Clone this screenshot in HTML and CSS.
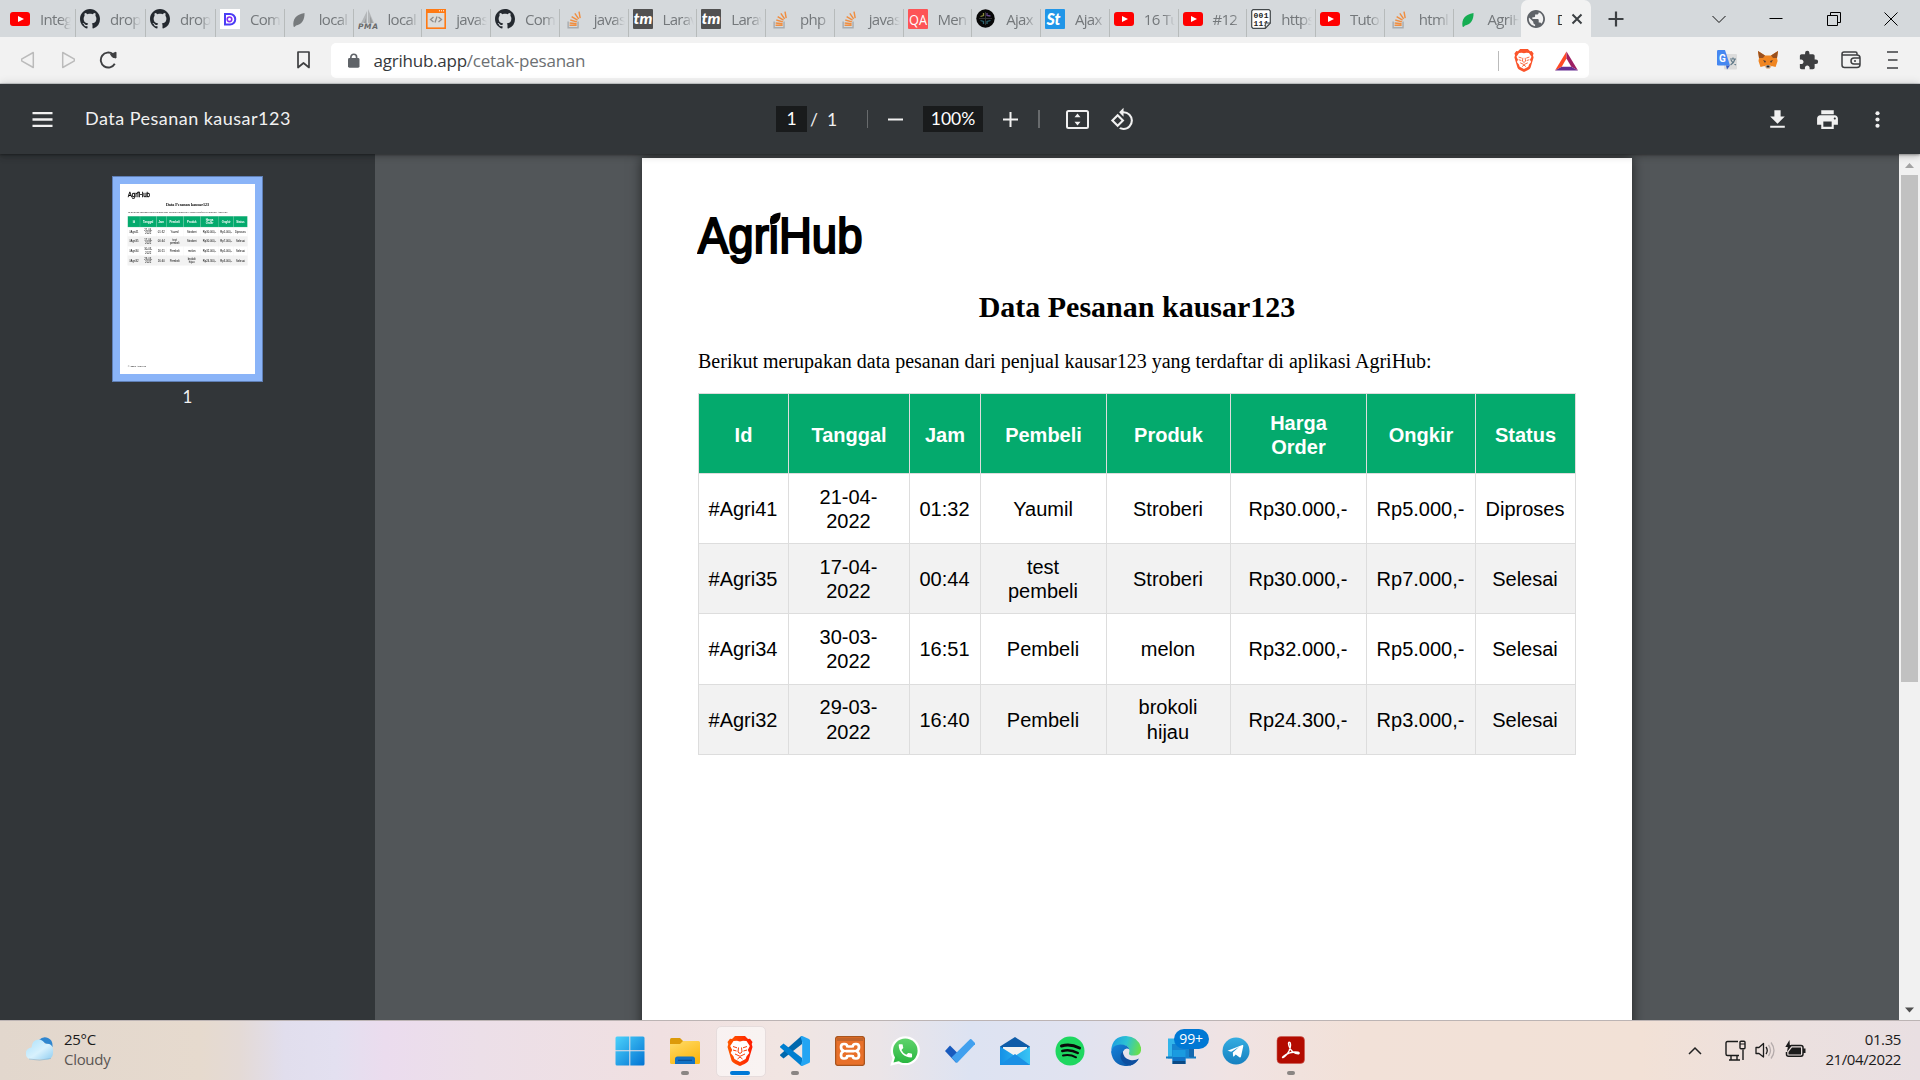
FILE: index.html
```html
<!DOCTYPE html>
<html lang="id">
<head>
<meta charset="utf-8">
<title>Data Pesanan kausar123</title>
<link rel="stylesheet" href="styles.css">
</head>
<body>
<svg class="defs" width="0" height="0" aria-hidden="true">
  <defs>
    <linearGradient id="gWin" x1="0" y1="0" x2="1" y2="1"><stop offset="0" stop-color="#4cd2fb"/><stop offset="1" stop-color="#0273d3"/></linearGradient>
    <linearGradient id="gFolder" x1="0" y1="0" x2="0.6" y2="1"><stop offset="0" stop-color="#ffdc6a"/><stop offset="1" stop-color="#fcb813"/></linearGradient>
    <linearGradient id="gBrave" x1="0" x2="1"><stop offset="0" stop-color="#ff5a00"/><stop offset="0.5" stop-color="#ff3c00"/><stop offset="1" stop-color="#ff1a00"/></linearGradient>
    <linearGradient id="gEdgeTop" x1="0" y1="0.3" x2="1" y2="0.5"><stop offset="0" stop-color="#1b9de2"/><stop offset="0.5" stop-color="#2dc3d2"/><stop offset="1" stop-color="#6be04a"/></linearGradient>
    <linearGradient id="gEdgeLow" x1="0" y1="0" x2="1" y2="1"><stop offset="0" stop-color="#1584dc"/><stop offset="1" stop-color="#0c4f9c"/></linearGradient>
    <linearGradient id="gTele" x1="0" y1="0" x2="0" y2="1"><stop offset="0" stop-color="#35ade1"/><stop offset="1" stop-color="#1680c0"/></linearGradient>
    <linearGradient id="gWhats" x1="0" y1="0" x2="0" y2="1"><stop offset="0" stop-color="#5fd36c"/><stop offset="1" stop-color="#2bb741"/></linearGradient>
    <linearGradient id="gMail" x1="0" y1="0" x2="1" y2="0"><stop offset="0" stop-color="#1591e6"/><stop offset="1" stop-color="#38c4f5"/></linearGradient>
    <linearGradient id="gCloud" x1="0" y1="0" x2="1" y2="1"><stop offset="0" stop-color="#a9e0fb"/><stop offset="0.55" stop-color="#d8f1fd"/><stop offset="1" stop-color="#8fcdf1"/></linearGradient>
    <symbol id="i-yt" viewBox="0 0 20 20"><rect y="3" width="20" height="14" rx="3" fill="#f00"/><path d="M8 7l6 3-6 3z" fill="#fff"/></symbol>
    <symbol id="i-gh" viewBox="0 0 16 16"><path fill="#24292f" d="M8 0C3.58 0 0 3.58 0 8c0 3.54 2.29 6.53 5.47 7.59.4.07.55-.17.55-.38 0-.19-.01-.82-.01-1.49-2.01.37-2.53-.49-2.69-.94-.09-.23-.48-.94-.82-1.13-.28-.15-.68-.52-.01-.53.63-.01 1.08.58 1.23.82.72 1.21 1.87.87 2.33.66.07-.52.28-.87.51-1.07-1.78-.2-3.64-.89-3.64-3.95 0-.87.31-1.59.82-2.15-.08-.2-.36-1.02.08-2.12 0 0 .67-.21 2.2.82.64-.18 1.32-.27 2-.27s1.36.09 2 .27c1.53-1.04 2.2-.82 2.2-.82.44 1.1.16 1.92.08 2.12.51.56.82 1.27.82 2.15 0 3.07-1.87 3.75-3.65 3.95.29.25.54.73.54 1.48 0 1.07-.01 1.93-.01 2.2 0 .21.15.46.55.38A8.01 8.01 0 0 0 16 8c0-4.42-3.58-8-8-8z"/></symbol>
    <symbol id="i-so" viewBox="0 0 24 24"><path fill="#f48024" opacity=".85" d="M15 20.500h-10v-2h10v2zm6-11.165l-1.621-9.335-1.993.346 1.620 9.335 1.994-.346zm-5.964 6.937l-9.746-.975-.186 2.016 9.755.879.177-1.920zm.538-2.587l-9.276-2.608-.526 1.954 9.306 2.500.496-1.846zm1.204-2.413l-8.297-4.864-1.029 1.743 8.298 4.865 1.028-1.744zm1.866-1.467l-5.339-7.829-1.672 1.140 5.339 7.829 1.672-1.140z"/><path fill="#a8acaf" d="M16 14v8H4v-8H2v10h16V14z"/></symbol>
    <symbol id="i-tm" viewBox="0 0 20 20"><rect width="20" height="20" rx="1" fill="#515151"/><text x="0.500" y="15" font-family="Lato" font-size="15" font-weight="900" font-style="italic" fill="#fff" textLength="19" lengthAdjust="spacingAndGlyphs">tm</text></symbol>
    <symbol id="i-leaf" viewBox="0 0 20 20"><path d="M4.500 17.500C3.500 10 7 5.500 15.500 4c.5 7-3.500 12-8.500 12.500l-1.500 1.500z"/></symbol>
    <symbol id="i-brave" viewBox="0 0 26 30"><path d="M8 0h10l3 3 2-.3L25.500 6l-.8 2 .8 3-4 13.500c-.6 2-5 4-8.500 5.500-3.500-1.500-7.900-3.500-8.500-5.500L.5 11l.8-3-.8-2L3 2.700 5 3z"/><path fill="#fff" d="M13 5.500l3-.7 3.500.3 3.300 5-2 3.800 1.500 3-2.700 3.300-1 2.800L13 26l-5.600-3-1-2.800-2.700-3.300 1.500-3-2-3.800 3.300-5 3.500-.3z"/><path fill="none" stroke="#f8400a" stroke-width="1" d="M6 10.500l4 1.300M20 10.500l-4 1.300M11.500 11.500L11 16l2 1.500 2-1.500-.5-4.500M8 18l5 2.300L18 18M10.500 23l2.500-2 2.500 2M6 14l3.500 1M20 14l-3.500 1"/></symbol>
  </defs>
</svg>

<div class="screen">
  <header class="tabstrip">
    <div class="tabs">
      <div class="tab"><svg class="fav"><use href="#i-yt"/></svg><span>Integ</span></div>
      <div class="tab"><svg class="fav"><use href="#i-gh"/></svg><span>dropz</span></div>
      <div class="tab"><svg class="fav"><use href="#i-gh"/></svg><span>dropz</span></div>
      <div class="tab"><svg class="fav" viewBox="0 0 20 20"><rect width="20" height="20" fill="#fff"/><path d="M5 5h5a5 5 0 0 1 0 10.500H5z" fill="none" stroke="#4a3df5" stroke-width="2"/><circle cx="9.500" cy="10.300" r="2.300" fill="none" stroke="#8a2cf0" stroke-width="1.600"/></svg><span>Com</span></div>
      <div class="tab"><svg class="fav gray"><use href="#i-leaf"/></svg><span>local</span></div>
      <div class="tab"><svg class="fav" viewBox="0 0 20 20"><path d="M3 14L9 2v12zM10 14V0l6 14z" fill="#b4b7b9"/><path d="M6 14l2-5v5zM12 14V7l3 7z" fill="#9a9d9f"/><text x="0" y="19.500" font-family="DejaVu Sans" font-size="7.500" font-weight="700" font-style="italic" fill="#6a6a6a" textLength="20">PMA</text></svg><span>local</span></div>
      <div class="tab"><svg class="fav" viewBox="0 0 20 20"><rect x=".8" y=".8" width="18.400" height="18.400" fill="#dcdcda" stroke="#ff7a14" stroke-width="1.600"/><path d="M0 0h20v4H0z" fill="#ff7a14"/><path d="M13 1.800h5" stroke="#fff" stroke-dasharray="1"/><path d="M7.500 8L4.500 10.500l3 2.500M12.500 8l3 2.500-3 2.500M11 7.500l-2 6" fill="none" stroke="#8d8d8d" stroke-width="1.300"/></svg><span>javas</span></div>
      <div class="tab"><svg class="fav"><use href="#i-gh"/></svg><span>Com</span></div>
      <div class="tab"><svg class="fav so"><use href="#i-so"/></svg><span>javas</span></div>
      <div class="tab"><svg class="fav"><use href="#i-tm"/></svg><span>Larav</span></div>
      <div class="tab"><svg class="fav"><use href="#i-tm"/></svg><span>Larav</span></div>
      <div class="tab"><svg class="fav so"><use href="#i-so"/></svg><span>php</span></div>
      <div class="tab"><svg class="fav so"><use href="#i-so"/></svg><span>javas</span></div>
      <div class="tab"><svg class="fav" viewBox="0 0 20 20"><rect width="20" height="20" rx="1" fill="#fd5456"/><text x="1" y="15.500" font-family="Open Sans" font-size="14" fill="#fff" textLength="18" lengthAdjust="spacingAndGlyphs">QA</text></svg><span>Men</span></div>
      <div class="tab"><svg class="fav" viewBox="0 0 20 20"><circle cx="9.500" cy="9.500" r="9.200" fill="#080808"/><path d="M4.500 7.500l3-1V4" fill="none" stroke="#8a8a3c" stroke-width="1.300"/><path d="M11 4v2.500l3.500.5" fill="none" stroke="#6a4a90" stroke-width="1.300"/><path d="M4.500 11.500l3 1V15M11 15v-2.500l3.500-1" fill="none" stroke="#2e6570" stroke-width="1.300"/><path d="M9.500 3v13M3 9.500h13" stroke="#333"/></svg><span>Ajax</span></div>
      <div class="tab"><svg class="fav" viewBox="0 0 20 20"><rect width="20" height="20" rx="1" fill="#2196e8"/><text x="1.500" y="15.500" font-family="Lato" font-size="16" font-weight="900" font-style="italic" fill="#fff">St</text></svg><span>Ajax</span></div>
      <div class="tab"><svg class="fav"><use href="#i-yt"/></svg><span>16 Tu</span></div>
      <div class="tab"><svg class="fav"><use href="#i-yt"/></svg><span>#12</span></div>
      <div class="tab"><svg class="fav" viewBox="0 0 20 20"><path d="M2 .7h16l1.300 1.300v12l-5 5.300H2L.7 18V2z" fill="#fff" stroke="#43484a" stroke-width="1.200"/><text x="2.500" y="8.500" font-family="Liberation Mono" font-size="8" font-weight="700" fill="#222" textLength="15">001</text><text x="2.500" y="16.500" font-family="Liberation Mono" font-size="8" font-weight="700" fill="#222" textLength="15">111</text><path d="M19.300 14h-5v5z" fill="#dfe2e3" stroke="#43484a"/></svg><span>https</span></div>
      <div class="tab"><svg class="fav"><use href="#i-yt"/></svg><span>Tutor</span></div>
      <div class="tab"><svg class="fav so"><use href="#i-so"/></svg><span>html</span></div>
      <div class="tab"><svg class="fav green"><use href="#i-leaf"/></svg><span>AgriH</span></div>
      <div class="tab active"><svg class="globe" viewBox="2 2 20 20"><path fill="#5f6368" d="M12 2C6.480 2 2 6.480 2 12s4.480 10 10 10 10-4.480 10-10S17.520 2 12 2zm-1 17.930c-3.950-.49-7-3.850-7-7.930 0-.62.08-1.210.21-1.790L9 15v1c0 1.100.9 2 2 2v1.930zm6.900-2.540c-.26-.81-1-1.390-1.900-1.390h-1v-3c0-.55-.45-1-1-1H8v-2h2c.55 0 1-.45 1-1V7h2c1.100 0 2-.9 2-2v-.41c2.930 1.190 5 4.060 5 7.410 0 2.080-.8 3.970-2.100 5.390z"/></svg><span>D</span><svg class="x" viewBox="0 0 12 12"><path d="M1.500 1.500l9 9m0-9l-9 9" stroke="#3c4043" stroke-width="2"/></svg></div>
    </div>
    <svg class="plus" viewBox="0 0 16 16"><path d="M8 .5v15M.5 8h15" stroke="#3c4043" stroke-width="2.200"/></svg>
    <div class="winctl">
      <svg viewBox="0 0 14 14"><path d="M.5 4l6.500 6.500L13.500 4" fill="none" stroke="#111"/></svg>
      <svg viewBox="0 0 14 14"><path d="M.5 6.500h13" stroke="#000"/></svg>
      <svg viewBox="0 0 14 14"><path d="M.5 3.500h10v10H.5zM3.500 3V.5h10v10H11" fill="none" stroke="#000"/></svg>
      <svg viewBox="0 0 14 14"><path d="M.5.5l13 13m0-13l-13 13" stroke="#000"/></svg>
    </div>
  </header>

  <div class="navbar">
    <div class="nav-icons">
      <svg viewBox="0 0 14 18"><path d="M12.300 1.500v15L1 10.200Q0 9 1 7.800z" fill="none" stroke="#bbb" stroke-width="1.500" stroke-linejoin="round"/></svg>
      <svg viewBox="0 0 14 18"><path d="M1.700 1.500v15L13 10.200Q14 9 13 7.800z" fill="none" stroke="#bbb" stroke-width="1.500" stroke-linejoin="round"/></svg>
      <svg class="reload" viewBox="0 0 19 18"><path d="M15.800 12.800A7.500 7.500 0 1 1 14 3.200" fill="none" stroke="#3e3f41" stroke-width="1.900"/><path d="M11.500 3.500L17 1.200V7q-4 0-5.500-3.500z" fill="#3e3f41" stroke="#3e3f41" stroke-linejoin="round"/></svg>
    </div>
    <svg class="bookmark" viewBox="0 0 13 18"><path d="M1 1h11v15.500L6.500 12 1 16.500z" fill="none" stroke="#3e3f41" stroke-width="1.700" stroke-linejoin="round"/></svg>
    <div class="address">
      <svg class="lock" viewBox="0 0 12 15"><rect y="5" width="12" height="10" rx="1.500" fill="#5f6368"/><path d="M3 6V4a3 3 0 0 1 6 0v2" fill="none" stroke="#5f6368" stroke-width="1.700"/></svg>
      <span class="url">agrihub.app<i>/cetak-pesanan</i></span>
      <span class="vr"></span>
      <svg class="shield"><use href="#i-brave" fill="#fb542b"/></svg>
      <svg class="bat" viewBox="0 0 24 20"><path d="M12 0L0 20l7-4 5-8.500z" fill="#ff4a26"/><path d="M12 0l12 20-7-4-5-8.500z" fill="#9e1f63"/><path d="M0 20h24l-7-4H7z" fill="#662d91"/></svg>
    </div>
    <div class="ext">
      <svg viewBox="0 0 20 20"><rect x="7" y="4" width="13" height="15.500" rx="1" fill="#dcdcdc"/><path d="M0 1.200Q0 0 1.200 0H8l5 15.500H1.200Q0 15.500 0 14.300z" fill="#4688f1"/><path d="M13 15.500l-3 4-1-4z" fill="#3359c0"/><text x="2" y="11.500" font-family="Roboto" font-size="10" font-weight="700" fill="#fff">G</text><path d="M13 9h6M16 7.500V9M18 9q-1 4-4.500 6M14 10q1.500 3.500 5 5" fill="none" stroke="#607988" stroke-width="1.200"/></svg>
      <svg viewBox="0 0 20 20"><path d="M0 1l7 4.500h6L20 1l-1 7 .6 3-2 6-4-1-2 2.500h-3L6.500 16l-4 1-2-6L1 8z" fill="#f08520"/><path d="M0 1l7 4.500L5 8 1 8zM20 1l-7 4.500L15 8l4 0z" fill="#99501f"/><path d="M5 10l3 1-1 2zM15 10l-3 1 1 2z" fill="#4d3b35"/><path d="M7 16l1.500-1h3l1.500 1-1.500 2.500h-3z" fill="#d9c8b8"/><path d="M8.500 15.500h3v2h-3z" fill="#222"/></svg>
      <svg viewBox="1 0 23 23"><path fill="#3e3f41" d="M20.500 11H19V7c0-1.100-.9-2-2-2h-4V3.500a2.500 2.500 0 0 0-5 0V5H4c-1.100 0-1.990.9-1.990 2v3.800H3.500c1.490 0 2.700 1.210 2.700 2.700s-1.210 2.700-2.700 2.700H2V20c0 1.100.9 2 2 2h3.800v-1.500c0-1.490 1.210-2.700 2.700-2.700 1.490 0 2.700 1.210 2.700 2.700V22H17c1.100 0 2-.9 2-2v-4h1.500a2.500 2.500 0 0 0 0-5z"/></svg>
      <svg viewBox="0 0 20 20"><path d="M16 5V3.500Q16 2 14.500 2H3Q1 2 1 4v11q0 2.500 2.500 2.500H16q3 0 3-3V8q0-3-3-3H3Q1 5 1 4M19 8h-6a3 3 0 0 0 0 6h6M13 11h2" fill="none" stroke="#3e3f41" stroke-width="1.500"/></svg>
      <svg viewBox="0 0 20 20"><path d="M5 2h11M6 10h9.500M5 18h11" stroke="#3e3f41" stroke-width="1.600"/></svg>
    </div>
  </div>

  <div class="pdfbar">
    <svg class="burger" viewBox="0 0 20 15"><path d="M0 1h20M0 7.500h20M0 14h20" stroke="#f1f1f1" stroke-width="2.300"/></svg>
    <span class="doc-title">Data Pesanan kausar123</span>
    <div class="pdf-mid">
      <span class="box pg">1</span><span class="slash">/</span><span class="total">1</span>
      <span class="sep"></span>
      <svg class="pm" viewBox="0 0 15 15"><path d="M0 7.500h15" stroke="#f1f1f1" stroke-width="2"/></svg>
      <span class="box zoom">100%</span>
      <svg class="pm" viewBox="0 0 15 15"><path d="M0 7.500h15M7.500 0v15" stroke="#f1f1f1" stroke-width="2"/></svg>
      <span class="sep thick"></span>
      <svg class="fit" viewBox="0 0 23 19"><rect x="1" y="1" width="21" height="17" rx="1.500" fill="none" stroke="#f1f1f1" stroke-width="2"/><path d="M8.500 7.200L11.500 3.500l3 3.700zM8.500 11.800l3 3.700 3-3.700z" fill="#f1f1f1"/></svg>
      <svg class="rot" viewBox="0 0 24 24"><path fill="#f1f1f1" d="M7.340 6.410L.86 12.900l6.490 6.480 6.490-6.480-6.500-6.490zM3.690 12.900l3.660-3.660L11 12.900l-3.660 3.660-3.650-3.660zm15.670-6.260A8.950 8.950 0 0 0 13 4V.76L8.760 5 13 9.240V6c1.790 0 3.580.68 4.950 2.050a7.007 7.007 0 0 1 0 9.900 6.973 6.973 0 0 1-7.790 1.440l-1.490 1.490C10.020 21.620 11.510 22 13 22c2.300 0 4.610-.88 6.360-2.640a8.980 8.980 0 0 0 0-12.720z"/></svg>
    </div>
    <div class="pdf-right">
      <svg viewBox="0 0 24 24"><path fill="#f1f1f1" d="M19 9h-4V3H9v6H5l7 7 7-7zM5 18v2h14v-2H5z"/></svg>
      <svg viewBox="0 0 24 24"><path fill="#f1f1f1" d="M19 8H5c-1.660 0-3 1.340-3 3v6h4v4h12v-4h4v-6c0-1.660-1.340-3-3-3zm-3 11H8v-5h8v5zm3-7c-.55 0-1-.45-1-1s.45-1 1-1 1 .45 1 1-.45 1-1 1zm-1-9H6v4h12V3z"/></svg>
      <svg viewBox="0 0 24 24"><g fill="#f1f1f1"><circle cx="12" cy="6" r="2"/><circle cx="12" cy="12" r="2"/><circle cx="12" cy="18" r="2"/></g></svg>
    </div>
  </div>

  <main class="viewer">
    <aside class="sidebar">
      <div class="thumb"><div class="thumb-view"></div></div>
      <span class="thumb-no">1</span>
    </aside>
    <section class="canvas">
      <article class="page">
        <svg class="logo" viewBox="0 0 166 56"><text x="1" y="42.500" font-family="Liberation Sans" font-size="50.500" stroke="#000" stroke-width="2.200" textLength="164.500" lengthAdjust="spacingAndGlyphs">AgriHub</text><path d="M73.500 14.500C71.500 8 75 3 83.500 2.500 84 9.500 80.500 13.800 76 14l-2 1z"/></svg>
        <h1>Data Pesanan kausar123</h1>
        <p>Berikut merupakan data pesanan dari penjual kausar123 yang terdaftar di aplikasi AgriHub:</p>
        <table>
          <colgroup><col class="c1"><col class="c2"><col class="c3"><col class="c4"><col class="c5"><col class="c6"><col class="c7"><col class="c8"></colgroup>
          <thead><tr><th>Id</th><th>Tanggal</th><th>Jam</th><th>Pembeli</th><th>Produk</th><th>Harga Order</th><th>Ongkir</th><th>Status</th></tr></thead>
          <tbody>
            <tr><td>#Agri41</td><td>21-04-<br>2022</td><td>01:32</td><td>Yaumil</td><td>Stroberi</td><td>Rp30.000,-</td><td>Rp5.000,-</td><td>Diproses</td></tr>
            <tr><td>#Agri35</td><td>17-04-<br>2022</td><td>00:44</td><td>test<br>pembeli</td><td>Stroberi</td><td>Rp30.000,-</td><td>Rp7.000,-</td><td>Selesai</td></tr>
            <tr><td>#Agri34</td><td>30-03-<br>2022</td><td>16:51</td><td>Pembeli</td><td>melon</td><td>Rp32.000,-</td><td>Rp5.000,-</td><td>Selesai</td></tr>
            <tr><td>#Agri32</td><td>29-03-<br>2022</td><td>16:40</td><td>Pembeli</td><td>brokoli<br>hijau</td><td>Rp24.300,-</td><td>Rp3.000,-</td><td>Selesai</td></tr>
          </tbody>
        </table>
        <footer>© 2022 AgriHub</footer>
      </article>
    </section>
    <div class="scroll">
      <svg viewBox="0 0 21 21"><path d="M6 14l4.500-5 4.500 5z" fill="#a3a3a3"/></svg>
      <div class="bar"></div>
      <svg viewBox="0 0 21 21"><path d="M6 8.500l4.500 5 4.500-5z" fill="#505050"/></svg>
    </div>
  </main>

  <footer class="taskbar">
    <div class="weather">
      <svg viewBox="0 0 28 24"><path d="M13 3Q17-1 22 1q5 2 4.500 9z" fill="#2f86cf"/><path d="M6 22.500a6 6 0 0 1-.5-12Q6 3 12.500 2.500 17 2.500 19 7q7-1 8 5 1 9-5 10.500z" fill="url(#gCloud)"/><path d="M3 22q10 2.500 22-.5" fill="none" stroke="#7daac5" opacity=".5"/></svg>
      <div><b>25°C</b><span>Cloudy</span></div>
    </div>
    <div class="apps">
      <div class="app"><svg viewBox="0 0 30 30"><path d="M.5 2q0-1.500 1.500-1.500h12.300v13.800H.5zM15.300.5H28q1.500 0 1.500 1.500v12.300H15.300zM.5 15.300h13.800v14.200H2Q.5 29.500.5 28zM15.300 15.300h14.200V28q0 1.500-1.500 1.500H15.300z" fill="url(#gWin)"/></svg></div>
      <div class="app run"><svg viewBox="0 0 30 30"><path d="M0 3.500Q0 2 1.500 2H10l3 3v5H0z" fill="#dc9a09"/><path d="M0 8h10l3-3h15.500Q30 5 30 6.500v20q0 1.500-1.500 1.500h-27Q0 28 0 26.500z" fill="url(#gFolder)"/><path d="M5 28v-5q0-2.500 2.500-2.500h15Q25 20.500 25 23v5z" fill="#1372c4"/><path d="M8 24.300h14" stroke="#0a4f94" stroke-width="1.200"/></svg></div>
      <div class="app current"><svg><use href="#i-brave" fill="url(#gBrave)"/></svg></div>
      <div class="app run"><svg viewBox="0 0 30 30"><path d="M22 8L3.500 22.500.3 19.800q-.6-.7 0-1.400L20.500.8 22 0z" fill="#0068ad"/><path d="M22 22L3.500 7.500.3 10.200q-.6.7 0 1.400L20.500 29.200 22 30z" fill="#007fd0"/><path d="M22.300 0L29 3q1 .5 1 1.600v20.800q0 1.100-1 1.600L22.300 30 20.500 29.200 22.200 24V6L20.500.8z" fill="#23a5f3"/></svg></div>
      <div class="app"><svg viewBox="0 0 30 30"><rect x=".6" y=".6" width="28.800" height="28.800" rx="2.500" fill="#e8702a" stroke="#a8541e" stroke-width="1.300"/><path d="M2 2h26v3H2z" fill="#c1632b"/><path d="M12.500 11.500q0-3.500-3-3.500h-.8Q6 8 6 11q0 3.200 3 4-3 .8-3 4.200Q6 22.500 8.700 22.500h.8q3 0 3-3.500M17.500 11.500q0-3.500 3-3.500h.8Q24 8 24 11q0 3.200-3 4 3 .8 3 4.200 0 3.300-2.700 3.300h-.8q-3 0-3-3.500M10.500 15.200h9M12.500 10.500h5M12.500 20h5" fill="none" stroke="#fff" stroke-width="2.700"/></svg></div>
      <div class="app"><svg viewBox="0 0 30 30"><path d="M.3 29.700L2.600 22A14.600 14.600 0 1 1 8.500 27.700z" fill="#fff"/><circle cx="15.300" cy="14.800" r="12.300" fill="url(#gWhats)"/><path fill="#2fba45" d="M3.500 26.500l2-7 5 5.200z"/><path transform="translate(6.500 6) scale(.74)" fill="#fff" d="M20 15.500c-1.250 0-2.450-.2-3.570-.57a1.020 1.020 0 0 0-1.020.24l-2.200 2.200a15.050 15.050 0 0 1-6.590-6.590l2.200-2.210a.96.96 0 0 0 .25-1A11.360 11.360 0 0 1 8.500 4c0-.55-.45-1-1-1H4c-.55 0-1 .45-1 1 0 9.390 7.610 17 17 17 .55 0 1-.45 1-1v-3.500c0-.55-.45-1-1-1z"/></svg></div>
      <div class="app"><svg viewBox="0 0 30 30"><path d="M0 15l5-5.500 11.500 11.500-5.500 5.700z" fill="#185abd"/><path d="M6.500 21.500L25 3.300q.7-.6 1.400 0L30 7q.5.600 0 1.300L12.500 26.500q-.7.700-1.400 0z" fill="#41a0ee"/></svg></div>
      <div class="app"><svg viewBox="0 0 30 30"><path d="M0 10.500L15 1l15 9.500L28 16H2z" fill="#0f5ca8"/><path d="M3 11h24v5L15 22 3 16z" fill="#f2f2f2"/><path d="M0 10.500L15 20l15-9.500V29H0z" fill="url(#gMail)"/><path d="M0 29l15-11 15 11z" fill="#1b90e4"/></svg></div>
      <div class="app"><svg viewBox="0 0 30 30"><circle cx="15" cy="15" r="14.500" fill="#1ed760"/><g fill="none" stroke="#0a0a0a" stroke-linecap="round"><path d="M6.500 10q9-2.500 18 2" stroke-width="3"/><path d="M7.300 15q8-2 15.500 2" stroke-width="2.500"/><path d="M8 19.500q7-1.500 13 1.800" stroke-width="2"/></g></svg></div>
      <div class="app"><svg viewBox="0 0 30 30"><path d="M.2 14Q1.500 0 15 0q12 .5 15 11.500 1 7.500-6.500 8-6 .5-5.500-2.500Q20 10 12 9 4 8.500.2 14z" fill="url(#gEdgeTop)"/><path d="M.1 16Q.5 9 9 8.500q8 0 9.500 5-4-2.500-6.500 2-3 9 7 10 4 .3 8-2Q22 30.500 14 30 2 29 .1 16z" fill="url(#gEdgeLow)"/><path d="M11.800 15.500q-4 4-1 9 3 4.500 8.700 5Q25 28 28 22.500 24 25 19 24q-7-2-7.200-8.500z" fill="#0d4f9f"/></svg></div>
      <div class="app"><svg viewBox="0 0 30 30"><path d="M2 2.500h8v20H2z" fill="#33b5ea"/><path d="M0 20.500h30v2H0z" fill="#1379c0"/><path d="M6 8h18v14H6z" fill="#1784d0"/><path d="M6.500 14h13v14h-13z" fill="#1a9be0"/><path d="M6.500 21h13v4h-13z" fill="#1173c7"/><path d="M6.500 25h13v3h-13z" fill="#0a4a86"/><path d="M23 13h5v8h-5z" fill="#1469b0"/></svg><em>99+</em></div>
      <div class="app"><svg viewBox="0 0 30 30"><circle cx="15" cy="15" r="13.500" fill="url(#gTele)"/><path d="M6.500 14.700L21.300 9q1.200-.3 1 1L20 20.500q-.4 1.500-1.600.8l-3.700-2.700-1.800 1.800q-.6.500-.8-.4l-.3-3.500 6.400-5.700-8 5-3.500-1q-1-.4-.2-.1z" fill="#fff"/></svg></div>
      <div class="app run"><svg viewBox="0 0 30 30"><rect x="1" y=".5" width="27.500" height="27" rx="4" fill="#b30b00" stroke="#c95a50" stroke-width=".6"/><path d="M7 21.500q3-1 6-6.500 2.500-5.500 1-8.500-1.500-1-1.500 1 .5 5 4.500 8.500 3 2 5.500 1.800 1.500-.8-.5-1.600Q15 15 8.500 19.500q-3 2.300-1.500 2z" fill="none" stroke="#fff" stroke-width="1.400"/></svg></div>
    </div>
    <div class="tray">
      <svg class="up" viewBox="0 0 14 9"><path d="M1 8l6-6 6 6" fill="none" stroke="#222" stroke-width="1.500"/></svg>
      <svg viewBox="0 0 21 21"><path d="M13 1.500H2.500q-1.500 0-1.500 1.500v11q0 1.500 1.500 1.500H14M6 15.500V20M12 15.500V20M4 20h11M18 9.500V20" fill="none" stroke="#1b1b1b" stroke-width="1.400"/><rect x="15" y="1.200" width="5" height="7.500" rx="1" fill="none" stroke="#1b1b1b" stroke-width="1.400"/><path d="M15 4h5" stroke="#1b1b1b"/></svg>
      <svg viewBox="0 0 21 21"><path d="M1 7.500h3l4.500-4v13.500L4 13.500H1z" fill="none" stroke="#1b1b1b" stroke-width="1.300" stroke-linejoin="round"/><path d="M11 7q2.500 3.500 0 7" fill="none" stroke="#1b1b1b" stroke-width="1.300"/><path d="M13.500 5q4 5.500 0 11M16 2.500q6 8 0 16" fill="none" stroke="#b5acac" stroke-width="1.300"/></svg>
      <svg viewBox="0 0 21 21"><path d="M6 5.500h10q2 0 2 2V14q0 2.200-2 2.200H3.500q-2 0-2-2V12" fill="none" stroke="#1b1b1b" stroke-width="1.500"/><path d="M7 7.500h9v7H3.500V12zM18 8.500h2.500v4.500H18z" fill="#1b1b1b"/><path d="M4.500 0L.3 7h2.500L2 12l5.300-7H4.800z" fill="#1b1b1b"/></svg>
      <div class="clock"><span>01.35</span><span class="date">21/04/2022</span></div>
    </div>
  </footer>
</div>
<script src="thumbnail.js"></script>
</body>
</html>
```
FILE: styles.css
```css
* { box-sizing: border-box; }
body { margin: 0; overflow: hidden; font-family: "Open Sans", "Noto Sans", sans-serif; }
svg { display: block; flex: none; }
.defs { position: absolute; }
.screen { width: 1920px; height: 1080px; display: flex; flex-direction: column; overflow: hidden; }

/* tab strip */
.tabstrip { height: 37px; flex: none; background: #d5d9dc; display: flex; padding-left: 6px; }
.tabs { display: flex; }
.tab { flex: none; width: 68.760px; height: 28px; margin-top: 9px; display: flex; align-items: flex-start; gap: 8px; padding-left: 4px; border-right: 1px solid #b7bbbb; }
.tab:nth-child(-n+3) { width: 70px; }
.tab span { width: 33px; padding-left: 2px; overflow: hidden; white-space: nowrap; font-size: 15px; line-height: 20px; color: #74787b; letter-spacing: -0.700px; -webkit-mask-image: linear-gradient(90deg, #000 65%, transparent); mask-image: linear-gradient(90deg, #000 65%, transparent); }
.fav { width: 20px; height: 20px; }
.fav.so { width: 17px; height: 18px; margin: 2px 1px 0 2px; }
.gray { fill: #777b7d; }
.green { fill: #15ad52; }
.tab:nth-child(22) { border: 0; width: 67.300px; }
.tab.active { width: 70px; height: 37px; margin: 0; padding: 9px 0 0 6px; background: #f2f2f2; border: 0; border-radius: 7px 7px 0 0; gap: 0; }
.tab.active span { width: 5px; padding: 0; margin: 0 9px 0 12px; color: #303336; -webkit-mask-image: none; mask-image: none; }
.globe { width: 18px; height: 18px; margin-top: 1px; }
.x { width: 12px; height: 12px; margin-top: 4px; }
.plus { width: 16px; height: 16px; margin: 11px 0 0 17px; }
.winctl { margin-left: auto; display: flex; gap: 43.500px; padding: 12px 22px 0 0; }
.winctl svg { width: 14px; height: 14px; }

/* navigation bar */
.navbar { height: 47px; flex: none; background: #f2f2f2; border-bottom: 1px solid #d0d3d5; display: flex; padding: 6px 18px 0 21px; }
.nav-icons { display: flex; gap: 26px; padding-top: 8px; width: 276px; }
.nav-icons svg { width: 14px; height: 18px; }
.nav-icons .reload { width: 19px; margin-left: -2px; }
.bookmark { width: 13px; height: 18px; margin: 8px 21px 0 0; }
.address { width: 1258px; height: 35px; background: #fff; border-radius: 5px; display: flex; align-items: center; padding: 0 11px 0 17px; }
.lock { width: 11.500px; height: 15px; }
.url { margin-left: 14px; flex: 1; font-size: 17px; letter-spacing: -0.230px; color: #36393c; }
.url i { font-style: normal; color: #6c7073; }
.vr { width: 1px; height: 20px; background: #bbb; }
.shield { width: 20px; height: 23px; margin: 0 21px 0 15px; }
.bat { width: 23px; height: 20px; }
.ext { margin-left: auto; display: flex; gap: 21.300px; padding-top: 7px; }
.ext svg { width: 20px; height: 20px; }

/* document toolbar */
.pdfbar { height: 70px; flex: none; background: #323639; color: #f1f1f1; display: flex; align-items: center; padding: 0 30px 0 32px; box-shadow: 0 -2px 8px rgba(0,0,0,.09), 0 4px 8px rgba(0,0,0,.06), 0 1px 2px rgba(0,0,0,.3), 0 2px 6px rgba(0,0,0,.15); z-index: 2; font-family: Lato, "Open Sans", sans-serif; font-size: 17.500px; }
.burger { width: 21px; height: 15px; }
.doc-title { margin: -2px 0 0 32px; width: 691px; font-size: 18px; letter-spacing: .480px; white-space: nowrap; }
.pdf-mid { display: flex; align-items: center; }
.box { height: 26px; line-height: 26px; background: #191b1c; color: #fff; text-align: center; }
.pg { width: 31px; }
.slash { width: 14px; text-align: center; }
.total { width: 22px; text-align: center; }
.sep { width: 1px; height: 18px; background: #686b6d; margin: 0 20px 0 -6px; }
.pm { width: 15px; height: 15px; }
.total + .sep { margin: 0 20px 0 24px; }
.zoom { width: 60px; margin: 0 20px; }
.thick { width: 2px; margin: 0 26px 0 20px; }
.fit { width: 23px; height: 19px; }
.rot { width: 25px; height: 25px; margin-left: 21px; }
.pdf-right { margin-left: auto; display: flex; gap: 25px; }
.pdf-right svg { width: 25px; height: 25px; }

/* viewer */
.viewer { flex: 1; min-height: 0; display: flex; background: #525659; }
.sidebar { width: 375px; background: #323639; padding-top: 22px; display: flex; flex-direction: column; align-items: center; }
.thumb { width: 151px; height: 206px; background: #8ab4f8; border: 1px solid #5f7fb5; padding: 7px; }
.thumb-view { width: 135px; height: 190px; overflow: hidden; background: #fff; }
.thumb-view .page { transform: scale(.13636); transform-origin: 0 0; box-shadow: none; }
.thumb-view th, .thumb-view td { border-width: 4px; border-color: #d4d4d4; }
.thumb-no { color: #f1f1f1; font-size: 17px; line-height: 22px; margin-top: 4px; font-family: Lato, sans-serif; }
.canvas { flex: 1; overflow: hidden; padding: 4px 0 0 267px; }
.page { width: 990px; height: 1400px; background: #fff; padding: 52px 56px 0; box-shadow: 0 0 12px rgba(0,0,0,.6); color: #000; display: flex; flex-direction: column; font-family: "Liberation Serif", serif; }
.logo { width: 166px; height: 56px; margin-left: -1px; }
.page h1 { margin: 23px 0 0; font-size: 30px; line-height: 36px; text-align: center; }
.page p { margin: 24px 0 0; font-size: 20px; line-height: 24px; white-space: nowrap; }
.page table { width: 878px; margin-top: 20px; border-collapse: collapse; table-layout: fixed; font: 20px/24.300px "Liberation Sans", Arial, sans-serif; }
.c1 { width: 90px; } .c2 { width: 121px; } .c3 { width: 71px; } .c4 { width: 126px; }
.c5 { width: 124px; } .c6 { width: 136px; } .c7 { width: 109px; } .c8 { width: 100px; }
.page th, .page td { border: 1px solid #ddd; padding: 0; text-align: center; vertical-align: middle; height: 70.200px; }
.page th { height: 80px; line-height: 24px; background: #04aa6d; color: #fff; padding: 2px 28px 0; }
.page th:not(:nth-child(6)) { padding: 2px 0 0; }
.page td { padding: 1px 1px 0 0; }
.page tbody tr:nth-child(even) { background: #f2f2f2; }
.page footer { margin: auto 0 50px; font-size: 20px; }
.scroll { width: 21px; background: #f1f1f1; display: flex; flex-direction: column; }
.scroll svg { width: 21px; height: 21px; }
.scroll .bar { height: 507px; margin: 0 2px auto; background: #c1c1c1; }

/* taskbar */
.taskbar { height: 60px; flex: none; border-top: 1px solid #bcb4b4; display: flex; align-items: center; color: #1b1b1b; z-index: 3;
  background: linear-gradient(90deg, #e2d7cd 0, #e6dace 200px, #e4dad6 240px, #e1deed 285px, #e3e0f0 335px, #ebdcee 385px, #ecdfe8 480px, #f0e0e1 660px, #f1e5e2 780px, #ebe5e8 880px, #dde3f2 970px, #e1e3f0 1080px, #f0e3e3 1230px, #f2e1d8 1360px, #f2e1d6 1640px, #ebe0df 1800px, #e9dfe2 1920px); }
.weather { display: flex; width: 602.600px; padding-left: 26px; gap: 10px; align-items: center; }
.weather svg { width: 28px; height: 24px; margin-top: -3px; }
.weather b, .weather span { display: block; font-weight: 400; font-size: 15px; line-height: 20px; letter-spacing: -0.300px; }
.weather div { margin-top: -4px; }
.weather span { color: #5a5653; }
.apps { display: flex; }
.app { width: 55.050px; height: 60px; display: flex; justify-content: center; padding-top: 15px; position: relative; }
.app svg { width: 30px; height: 30px; }
.run::after, .current::after { content: ""; position: absolute; left: 23.500px; top: 50px; width: 8px; height: 4px; border-radius: 2px; background: #8a8583; }
.current::after { left: 17.500px; width: 20px; background: #0078d7; }
.current::before { content: ""; position: absolute; left: 3.500px; top: 5px; width: 48px; height: 49px; border-radius: 5px; background: rgba(255,255,255,.55); border: 1px solid #e6dcdc; }
.current svg { position: relative; width: 26px; }
.app em { position: absolute; left: 20.500px; top: 8px; width: 35px; height: 20px; border-radius: 10px; background: #0078d4; color: #fff; font-style: normal; font-size: 14px; line-height: 20px; text-align: center; letter-spacing: -0.200px; }
.tray { margin-left: auto; display: flex; align-items: center; padding-right: 19px; gap: 9px; }
.tray svg { width: 21px; height: 21px; }
.tray .up { width: 14px; height: 9px; margin-right: 14px; }
.clock { text-align: right; font-size: 15px; line-height: 20px; letter-spacing: -0.400px; width: 86px; margin-top: -4px; }
.clock span { display: block; }
```
FILE: thumbnail.js
```javascript
// The sidebar preview shows the same page at thumbnail scale.
document.querySelector('.thumb-view').appendChild(document.querySelector('.canvas .page').cloneNode(true));
```
